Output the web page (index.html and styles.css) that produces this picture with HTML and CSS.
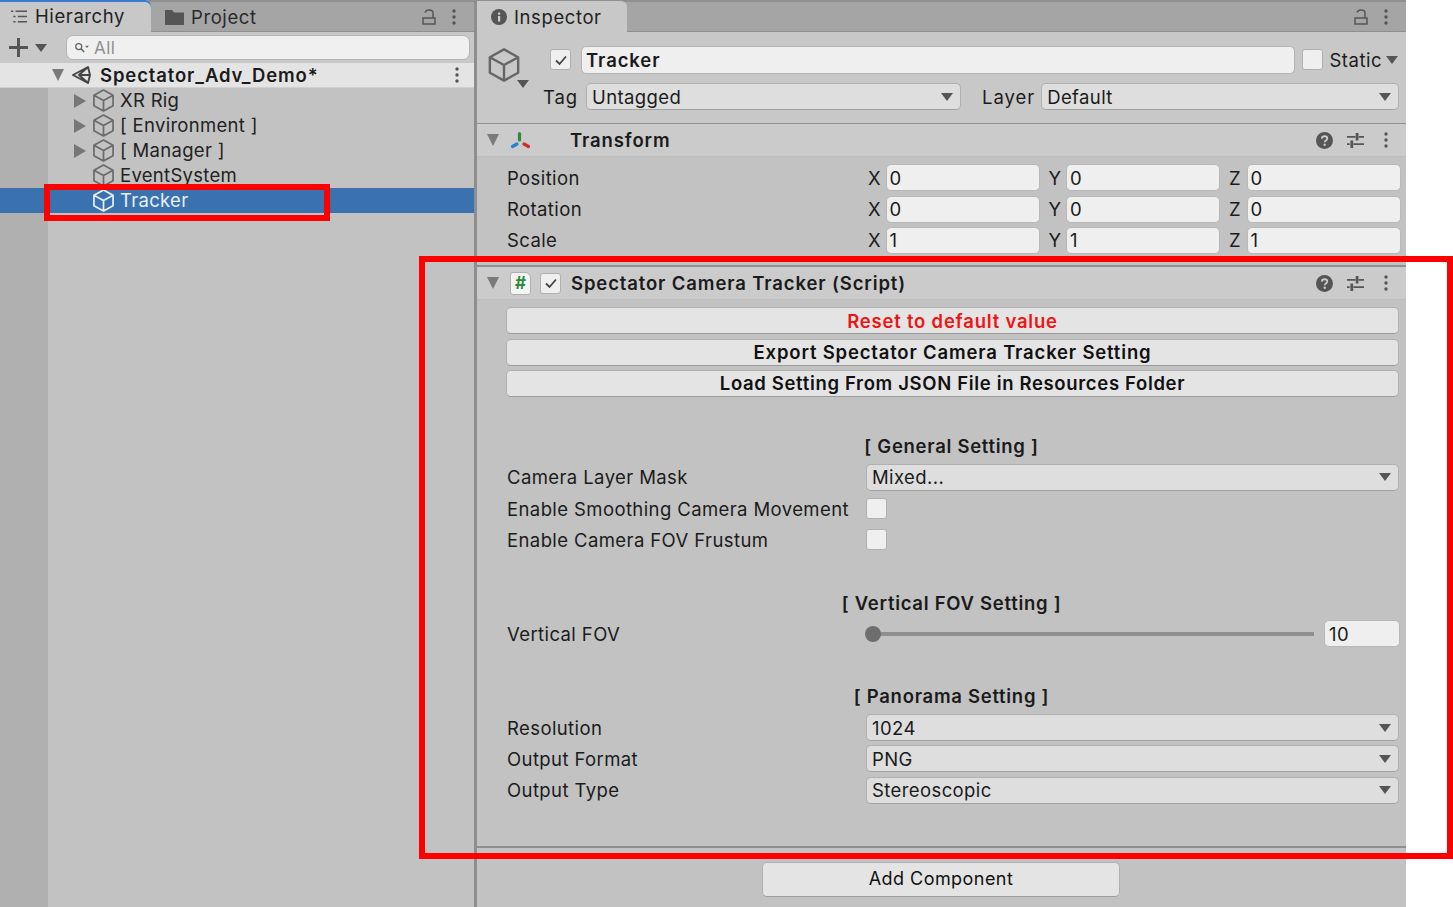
FILE: index.html
```html
<!DOCTYPE html>
<html lang="en">
<head>
<meta charset="utf-8">
<title>Unity Inspector</title>
<link rel="stylesheet" href="styles.css">
</head>
<body>
<svg class="defs" width="0" height="0" aria-hidden="true">
  <symbol id="cube" viewBox="1 0 22 24"><path d="M12 1 22 6.500V17.500L12 23 2 17.500V6.500ZM2 6.500 12 12 22 6.500M12 12V23" fill="none" stroke="currentColor" stroke-linejoin="round"/></symbol>
  <symbol id="dots" viewBox="0 0 4 16"><circle cx="2" cy="2" r="1.700"/><circle cx="2" cy="8" r="1.700"/><circle cx="2" cy="14" r="1.700"/></symbol>
  <symbol id="help" viewBox="0 0 16 16"><circle cx="8" cy="8" r="8" fill="#555"/><path d="M5.500 6.200C5.600 4.700 6.600 4 8 4c1.500 0 2.600.8 2.600 2.100 0 1.800-2.400 1.800-2.400 3.500" fill="none" stroke="#cbcbcb" stroke-width="1.700"/><circle cx="8.200" cy="12" r="1.100" fill="#cbcbcb"/></symbol>
  <symbol id="sliders" viewBox="0 0 16 16"><path d="M0 4.500H8M11 4.500H16M0 11.500H2.500M6 11.500H16" stroke="#555" stroke-width="1.600"/><path d="M9.500 1V8M4.500 8V15" stroke="#555" stroke-width="2.600"/></symbol>
  <symbol id="lock" viewBox="0 0 14 16"><path d="M1 9H13V15H1ZM11 9V4C11 2 9.500 1 7 1S3.500 2 3 3.500" fill="none" stroke="#555" stroke-width="1.500"/></symbol>
  <symbol id="check" viewBox="0 0 14 14"><path d="M2 7.500 5.500 11 12 3.500" fill="none" stroke="#444" stroke-width="1.800"/></symbol>
</svg>
<div class="window">
  <section class="pane hierarchy">
    <div class="tabbar">
      <div class="tab active hier-tab">
        <svg class="list-icon" viewBox="0 0 14 11"><path d="M0 1H2M4 1H14M2 5.500H4M6 5.500H14M2 10H4M6 10H14" stroke="#555" stroke-width="1.300"/></svg>
        <span>Hierarchy</span>
      </div>
      <div class="tab project-tab">
        <svg class="folder-icon" viewBox="0 0 19 15"><path d="M0 0H7L9 2.500H19V15H0Z" fill="#555"/></svg>
        <span>Project</span>
      </div>
      <div class="tab-tools">
        <svg class="lock"><use href="#lock"/></svg>
        <svg class="dots"><use href="#dots"/></svg>
      </div>
    </div>
    <div class="toolbar">
      <div class="plus"></div>
      <div class="caret small"></div>
      <div class="search">
        <svg class="search-icon" viewBox="0 0 16 12"><circle cx="5" cy="5" r="3.300" fill="none" stroke="#666" stroke-width="1.400"/><path d="M7.500 7.500 11 11" stroke="#666" stroke-width="1.600"/><path d="M12 4H16L14 6.500Z" fill="#666"/></svg>
        <span>All</span>
      </div>
    </div>
    <div class="scene-row">
      <div class="tri-down scene-tri"></div>
      <svg class="unity" viewBox="0 0 20 20"><path d="M1 10 16 2 18 10 16 18ZM7 10H18M16 2 7 10 16 18" fill="none" stroke="#444" stroke-width="1.900" stroke-linejoin="round"/></svg>
      <strong>Spectator_Adv_Demo*</strong>
      <svg class="dots scene-dots"><use href="#dots"/></svg>
    </div>
    <div class="tree">
      <div class="tree-row"><div class="tri-right"></div><svg class="cube"><use href="#cube"/></svg><span>XR Rig</span></div>
      <div class="tree-row"><div class="tri-right"></div><svg class="cube"><use href="#cube"/></svg><span>[ Environment ]</span></div>
      <div class="tree-row"><div class="tri-right"></div><svg class="cube"><use href="#cube"/></svg><span>[ Manager ]</span></div>
      <div class="tree-row"><div class="tri-none"></div><svg class="cube"><use href="#cube"/></svg><span>EventSystem</span></div>
      <div class="tree-row selected"><div class="tri-none"></div><svg class="cube"><use href="#cube"/></svg><span>Tracker</span></div>
    </div>
  </section>

  <section class="pane inspector">
    <div class="tabbar">
      <div class="tab active insp-tab">
        <svg class="info-icon" viewBox="0 0 16 16"><circle cx="8" cy="8" r="8" fill="#555"/><rect x="7" y="7" width="2.200" height="5.500" fill="#ccc"/><rect x="7" y="3.500" width="2.200" height="2.200" fill="#ccc"/></svg>
        <span>Inspector</span>
      </div>
      <div class="tab-tools">
        <svg class="lock"><use href="#lock"/></svg>
        <svg class="dots"><use href="#dots"/></svg>
      </div>
    </div>

    <div class="object-head">
      <div class="object-icon">
        <svg class="big-cube"><use href="#cube"/></svg>
        <div class="caret small obj-caret"></div>
      </div>
      <div class="object-main">
        <div class="name-row">
          <div class="checkbox"><svg class="check"><use href="#check"/></svg></div>
          <div class="name-field">Tracker</div>
          <div class="checkbox"></div>
          <span class="static">Static</span>
          <div class="caret small"></div>
        </div>
        <div class="tag-row">
          <span class="tag-label">Tag</span>
          <div class="select tag-select"><span>Untagged</span><div class="caret"></div></div>
          <span class="layer-label">Layer</span>
          <div class="select layer-select"><span>Default</span><div class="caret"></div></div>
        </div>
      </div>
    </div>

    <div class="comp-head transform-head">
      <div class="tri-down"></div>
      <svg class="axes" viewBox="0 0 20 20"><path d="M9.500 3.500V10" stroke="#2f8a3d" stroke-width="3.200" stroke-linecap="round"/><path d="M7 14 2.500 16.500" stroke="#2a7fd0" stroke-width="3.200" stroke-linecap="round"/><path d="M14 14 18.500 16.500" stroke="#c9312c" stroke-width="3.200" stroke-linecap="round"/></svg>
      <strong>Transform</strong>
      <div class="comp-tools">
        <svg class="tool"><use href="#help"/></svg>
        <svg class="tool"><use href="#sliders"/></svg>
        <svg class="dots"><use href="#dots"/></svg>
      </div>
    </div>
    <div class="transform-body">
      <div class="vec-row"><span class="vec-label">Position</span><div class="vec"><span>X</span><div class="field">0</div><span>Y</span><div class="field">0</div><span>Z</span><div class="field">0</div></div></div>
      <div class="vec-row"><span class="vec-label">Rotation</span><div class="vec"><span>X</span><div class="field">0</div><span>Y</span><div class="field">0</div><span>Z</span><div class="field">0</div></div></div>
      <div class="vec-row"><span class="vec-label">Scale</span><div class="vec"><span>X</span><div class="field">1</div><span>Y</span><div class="field">1</div><span>Z</span><div class="field">1</div></div></div>
    </div>

    <div class="comp-head script-head">
      <div class="tri-down"></div>
      <div class="script-icon">#</div>
      <div class="checkbox small-check"><svg class="check"><use href="#check"/></svg></div>
      <strong>Spectator Camera Tracker (Script)</strong>
      <div class="comp-tools">
        <svg class="tool"><use href="#help"/></svg>
        <svg class="tool"><use href="#sliders"/></svg>
        <svg class="dots"><use href="#dots"/></svg>
      </div>
    </div>
    <div class="script-body">
      <div class="line"><div class="btn danger">Reset to default value</div></div>
      <div class="line"><div class="btn">Export Spectator Camera Tracker Setting</div></div>
      <div class="line"><div class="btn load">Load Setting From JSON File in Resources Folder</div></div>
      <div class="line"></div>
      <div class="line title">[ General Setting ]</div>
      <div class="line prop"><span>Camera Layer Mask</span><div class="select"><span>Mixed...</span><div class="caret"></div></div></div>
      <div class="line prop"><span>Enable Smoothing Camera Movement</span><div class="checkbox"></div></div>
      <div class="line prop"><span>Enable Camera FOV Frustum</span><div class="checkbox"></div></div>
      <div class="line"></div>
      <div class="line title">[ Vertical FOV Setting ]</div>
      <div class="line prop"><span>Vertical FOV</span><div class="slider"><div class="track"><div class="thumb"></div></div><div class="field fov">10</div></div></div>
      <div class="line"></div>
      <div class="line title">[ Panorama Setting ]</div>
      <div class="line prop"><span>Resolution</span><div class="select"><span>1024</span><div class="caret"></div></div></div>
      <div class="line prop"><span>Output Format</span><div class="select"><span>PNG</span><div class="caret"></div></div></div>
      <div class="line prop"><span>Output Type</span><div class="select"><span>Stereoscopic</span><div class="caret"></div></div></div>
    </div>
    <div class="add-area"><div class="btn add">Add Component</div></div>
  </section>
</div>
<div class="mark mark-tracker"></div>
<div class="mark mark-script"></div>
</body>
</html>
```

FILE: styles.css
```css
* { box-sizing: border-box; }
html, body { margin: 0; height: 100%; background: #fff; overflow: hidden; }
body { font-family: Inter, "Noto Sans", sans-serif; font-size: 18.500px; letter-spacing: 0.4px; color: #1b1b1b; position: relative; }
svg.defs { position: absolute; }
svg { display: block; flex: none; }

.window { display: flex; width: 1406px; height: 907px; background: #c2c2c2; }
.pane { display: flex; flex-direction: column; height: 100%; }
.hierarchy { width: 477px; border-right: 3px solid #8e8e8e; }
.inspector { width: 929px; }

.tabbar { height: 32px; flex: none; display: flex; background: #a5a5a5; border-top: 2px solid #8f8f8f; border-bottom: 1px solid #8f8f8f; align-items: stretch; }
.tab { display: flex; align-items: center; margin-bottom: -1px; color: #222; letter-spacing: 0.6px; }
.tab.active { background: #c8c8c8; border-radius: 0 6px 0 0; }
.hier-tab { width: 151px; padding-left: 11px; gap: 8px; box-shadow: inset 0 2px 0 #3a7bd0; margin-top: -2px; }
.list-icon { width: 16px; height: 13px; }
.project-tab { margin-left: 14px; gap: 7px; color: #2a2a2a; }
.folder-icon { width: 19px; height: 15px; }
.tab-tools { margin-left: auto; display: flex; align-items: center; gap: 16px; padding-right: 18px; }
.lock { width: 14px; height: 16px; }
.dots { width: 4px; height: 16px; fill: #555; }
.insp-tab { width: 150px; padding-left: 14px; gap: 7px; margin-top: -1px; border-top: 1px solid #c8c8c8; }
.info-icon { width: 16px; height: 16px; }

.toolbar { height: 31px; flex: none; background: #c8c8c8; display: flex; align-items: center; padding: 0 4px 0 9px; }
.plus { width: 19px; height: 19px; flex: none; background: linear-gradient(#555, #555) center / 100% 3px no-repeat, linear-gradient(#555, #555) center / 3px 100% no-repeat; }
.toolbar .caret { margin: 0 0 0 7px; }
.search { flex: 1; height: 25px; margin-left: 19px; background: #f0f0f0; border: 1px solid #b4b4b4; border-radius: 7px; display: flex; align-items: center; padding-left: 7px; gap: 5px; color: #8f8f8f; font-size: 17px; }
.search-icon { width: 15px; height: 11px; }

.scene-row { height: 25px; flex: none; background: #e4e4e4; border-bottom: 1px solid #d0d0d0; display: flex; align-items: center; padding: 0 15px 0 52px; }
.scene-row strong { font-size: 18.500px; font-weight: 600; margin-left: 8px; letter-spacing: 0.87px; }
.unity { width: 20px; height: 20px; margin-left: 8px; }
.scene-dots { margin-left: auto; }

.tree { flex: 1; background: linear-gradient(90deg, #b0b0b0 48px, #c2c2c2 48px); }
.tree-row { height: 25px; display: flex; align-items: center; padding-left: 74px; color: #222; }
.tree-row span { margin: 0 0 2px 6px; letter-spacing: 0.3px; }
.tri-right { width: 0; height: 0; border-left: 12px solid #777; border-top: 7px solid transparent; border-bottom: 7px solid transparent; margin-right: 7px; flex: none; }
.tri-none { width: 19px; flex: none; }
.cube { width: 21px; height: 23px; color: #6b6b6b; stroke-width: 1.800; }
.selected { background: #3a72b0; color: #e8eef6; }
.selected .cube { color: #e8eef6; }
.tri-down { width: 0; height: 0; border-top: 12px solid #7a7a7a; border-left: 6.500px solid transparent; border-right: 6.500px solid transparent; flex: none; }

.object-head { height: 92px; flex: none; background: #c8c8c8; border-bottom: 1px solid #8f8f8f; display: flex; padding: 13px 7px 0 11px; }
.object-icon { width: 55px; flex: none; position: relative; }
.big-cube { width: 32px; height: 34px; color: #666; margin-top: 3px; stroke-width: 1.700; }
.obj-caret { position: absolute; left: 29px; top: 35px; }
.object-main { flex: 1; display: flex; flex-direction: column; gap: 9px; }
.name-row { height: 29px; display: flex; align-items: center; }
.checkbox { width: 21px; height: 21px; flex: none; background: #efefef; border: 1px solid #b0b0b0; border-radius: 3px; display: flex; align-items: center; justify-content: center; }
.check { width: 14px; height: 14px; }
.name-row > .checkbox:first-child { margin-left: 7px; }
.name-field { flex: 1; height: 28px; margin: 0 7px 0 10px; background: #efefef; border: 1px solid #b4b4b4; border-radius: 5px; padding-left: 4px; display: flex; align-items: center; font-weight: 600; font-size: 18.500px; letter-spacing: 0.9px; }
.static { margin: 0 4px 0 6px; letter-spacing: 0.5px; }
.name-row .caret { margin-right: 1px; }
.tag-row { height: 27px; display: flex; align-items: center; }
.tag-label { margin-right: 8px; letter-spacing: 0.9px; }
.select { height: 27px; display: flex; align-items: center; justify-content: space-between; background: #dedede; border: 1px solid #b0b0b0; border-bottom-color: #a2a2a2; border-radius: 5px; padding: 0 7px 0 5px; }
.tag-select { width: 375px; flex: none; }
.layer-label { margin: 0 6px 0 21px; letter-spacing: 0.95px; }
.layer-select { flex: 1; }
.caret { width: 0; height: 0; border-top: 8px solid #555; border-left: 6.500px solid transparent; border-right: 6.500px solid transparent; flex: none; }
.caret.small { border-top-width: 8px; border-left-width: 6px; border-right-width: 6px; }

.comp-head { height: 33px; flex: none; background: #cbcbcb; border-bottom: 1px solid #bdbdbd; display: flex; align-items: center; padding: 0 18px 0 10px; }
.comp-head strong { font-size: 18.500px; font-weight: 600; letter-spacing: 0.87px; }
.axes { width: 20px; height: 20px; margin: 0 0 0 11px; }
.transform-head strong { margin-left: 40px; }
.comp-tools { margin-left: auto; display: flex; align-items: center; gap: 14px; }
.tool { width: 17px; height: 17px; }
.comp-tools .dots { margin-left: 6px; }
.script-head { border-top: 2px solid #8f8f8f; height: 35px; }
.script-icon { width: 21px; height: 23px; margin-left: 11px; background: #f4f4f4; border: 1px solid #b0b0b0; border-radius: 3px 6px 3px 3px; color: #2f8a3d; display: flex; align-items: center; justify-content: center; font-size: 17px; font-weight: 700; letter-spacing: 0; }
.small-check { margin: 0 10px 0 9px; }

.transform-body { height: 108px; flex: none; padding: 5.200px 6px 0 30px; }
.vec-row { height: 31.300px; display: flex; align-items: center; }
.vec-label { width: 361px; flex: none; }
.vec { flex: 1; display: flex; align-items: center; }
.vec > span { width: 17.500px; flex: none; }
.vec .field { width: 154px; flex: none; margin-right: 9px; padding-left: 3px; }
.field { height: 27px; background: #efefef; border: 1px solid #b8b8b8; border-radius: 5px; padding-left: 4px; display: flex; align-items: center; }

.script-body { height: 546px; flex: none; padding: 5.200px 7px 0 29px; }
.line { height: 31.300px; display: flex; align-items: center; }
.btn { flex: 1; height: 27px; background: #e4e4e4; border: 1px solid #b0b0b0; border-bottom-color: #9c9c9c; border-radius: 5px; display: flex; align-items: center; justify-content: center; font-weight: 600; letter-spacing: 0.82px; color: #111; }
.load { letter-spacing: 0.66px; }
.danger { color: #f01414; letter-spacing: 0.78px; }
.title { justify-content: center; font-weight: 600; letter-spacing: 0.72px; padding-right: 2px; }
.prop { padding-left: 1px; }
.prop > span:first-child { width: 359px; flex: none; }
.prop .select { flex: 1; }
.slider { flex: 1; display: flex; align-items: center; gap: 10px; margin-right: -1px; }
.track { flex: 1; height: 4px; background: #8f8f8f; display: flex; align-items: center; }
.thumb { width: 16px; height: 16px; border-radius: 50%; background: #6e6e6e; flex: none; margin-left: -1px; }
.fov { width: 76px; flex: none; }

.add-area { flex: 1; border-top: 2px solid #8f8f8f; padding: 14px 0 0 285px; display: flex; align-items: flex-start; }
.add { flex: none; width: 358px; height: 35px; padding-bottom: 2px; font-weight: 400; font-size: 18px; letter-spacing: 0.45px; }

.mark { position: absolute; border: 6px solid #ff0000; pointer-events: none; }
.mark-tracker { left: 44px; top: 184px; width: 286px; height: 37px; }
.mark-script { left: 419px; top: 256px; width: 1034px; height: 603px; }
```
